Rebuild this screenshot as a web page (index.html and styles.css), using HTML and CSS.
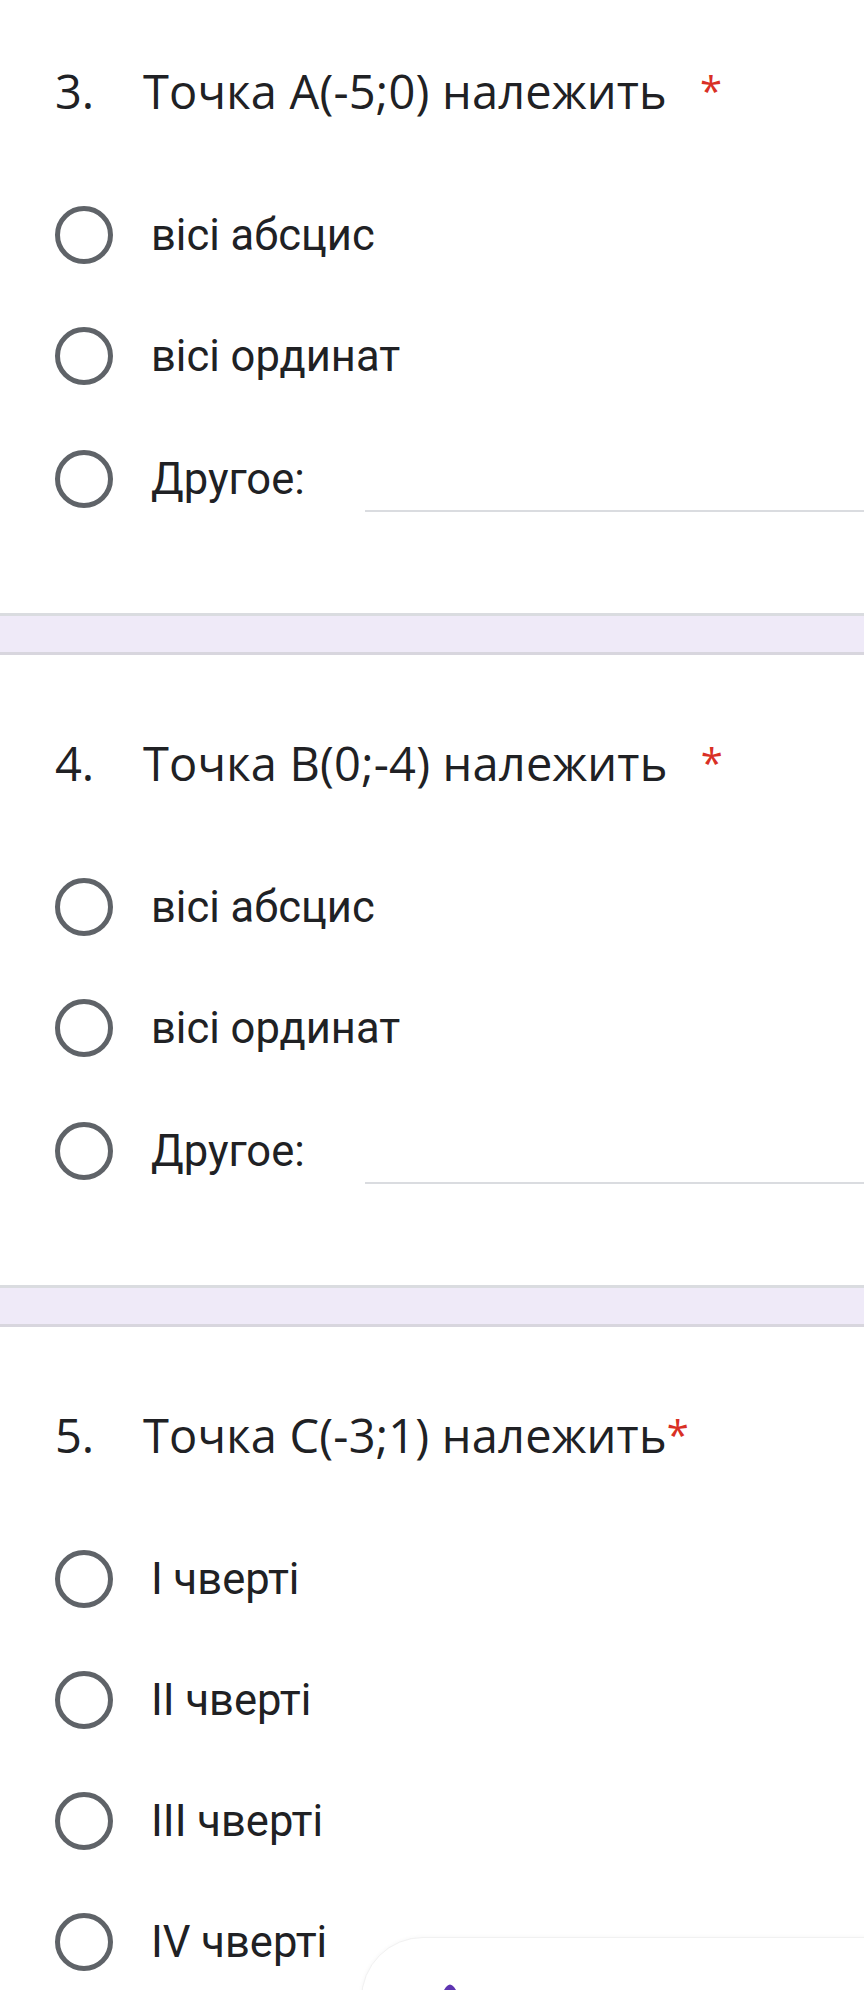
FILE: index.html
```html
<!DOCTYPE html>
<html lang="uk">
<head>
<meta charset="utf-8">
<title>Форма</title>
<link rel="stylesheet" href="styles.css">
</head>
<body>
<main class="page">
  <section class="question first">
    <div class="q-title"><span class="num">3.</span><span class="text">Точка А(-5;0) належить</span><span class="req wide">*</span></div>
    <div class="options">
      <div class="opt"><span class="radio"></span><span class="label">вісі абсцис</span></div>
      <div class="opt"><span class="radio"></span><span class="label">вісі ординат</span></div>
      <div class="opt other"><span class="radio"></span><span class="label">Другое:</span><span class="other-input"></span></div>
    </div>
  </section>
  <div class="band"></div>
  <section class="question">
    <div class="q-title"><span class="num">4.</span><span class="text">Точка В(0;-4) належить</span><span class="req wide">*</span></div>
    <div class="options">
      <div class="opt"><span class="radio"></span><span class="label">вісі абсцис</span></div>
      <div class="opt"><span class="radio"></span><span class="label">вісі ординат</span></div>
      <div class="opt other"><span class="radio"></span><span class="label">Другое:</span><span class="other-input"></span></div>
    </div>
  </section>
  <div class="band"></div>
  <section class="question">
    <div class="q-title"><span class="num">5.</span><span class="text">Точка С(-3;1) належить</span><span class="req">*</span></div>
    <div class="options">
      <div class="opt"><span class="radio"></span><span class="label">I чверті</span></div>
      <div class="opt"><span class="radio"></span><span class="label">II чверті</span></div>
      <div class="opt"><span class="radio"></span><span class="label">III чверті</span></div>
      <div class="opt"><span class="radio"></span><span class="label">IV чверті</span></div>
    </div>
  </section>
  <div class="float-card">
    <svg class="float-icon" width="24" height="24" viewBox="0 0 24 24"><path d="M12 1.5 Q14 1.5 16 4 L20 10 Q22 12 20 14 L16 20 Q14 22.5 12 22.5 Q10 22.5 8 20 L4 14 Q2 12 4 10 L8 4 Q10 1.5 12 1.5 Z" fill="#5e35b1"/></svg>
  </div>
</main>
</body>
</html>
```
FILE: styles.css
```css
html, body {
  margin: 0;
  padding: 0;
  background: #ffffff;
}
body {
  width: 864px;
  height: 1990px;
  overflow: hidden;
  color: #202124;
}
.page {
  position: relative;
  height: 1990px;
  overflow: hidden;
}
.question {
  padding: 80px 0 105px 55px;
}
.question.first {
  padding-top: 63px;
}
.q-title {
  display: flex;
  align-items: flex-start;
  font-family: "Open Sans", "Noto Sans", sans-serif;
  font-size: 47px;
  letter-spacing: 0.2px;
  line-height: 56px;
  color: #202124;
}
.num {
  width: 88px;
  flex: none;
  letter-spacing: 0;
}
.req {
  color: #d93025;
  font-size: 40px;
  margin-left: 0;
}
.req.wide {
  margin-left: 33px;
}
.options {
  display: flex;
  flex-direction: column;
  gap: 63px;
  margin-top: 87px;
}
.opt {
  display: flex;
  align-items: center;
  height: 58px;
  font-family: Roboto, "Liberation Sans", sans-serif;
  font-size: 43.5px;
}
.opt.other {
  margin-top: 2px;
}
.radio {
  width: 48px;
  height: 48px;
  border: 5px solid #5f6368;
  border-radius: 50%;
  flex: none;
  margin-right: 38px;
}
.label {
  white-space: nowrap;
}
.other-input {
  flex: 1;
  align-self: flex-end;
  height: 20px;
  margin-left: 60px;
  margin-bottom: -4px;
  border-bottom: 2px solid #dadce0;
}
.band {
  height: 36px;
  background: #efeaf8;
  border-top: 3px solid #dadce0;
  border-bottom: 3px solid #d8d6de;
}
.float-card {
  position: absolute;
  left: 361px;
  top: 1937px;
  width: 600px;
  height: 200px;
  background: #ffffff;
  border-radius: 62px;
  border: 1px solid #f1f1f1;
  box-shadow: 0 0 4px rgba(0,0,0,0.04);
}
.float-icon {
  position: absolute;
  left: 76px;
  top: 45px;
}
```
